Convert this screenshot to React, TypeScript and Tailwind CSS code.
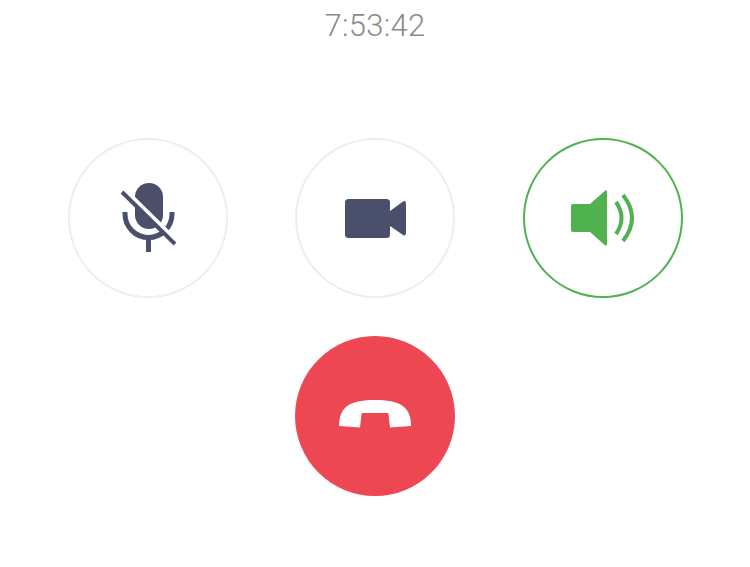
function MicOff() {
  return (
    <svg width="56" height="72" viewBox="0 0 56 72" fill="none">
      <rect x="15" y="1" width="28" height="46" rx="14" fill="#4a4f6c" />
      <path d="M5 30v2a23.500 23.500 0 0 0 47 0v-2" stroke="#4a4f6c" strokeWidth="5" />
      <path d="M28.500 56v14" stroke="#4a4f6c" strokeWidth="5" />
      <path d="M2 10l53 52" stroke="#ffffff" strokeWidth="4" transform="translate(2.500 -2.500)" />
      <path d="M2 10l53 52" stroke="#4a4f6c" strokeWidth="4" />
    </svg>
  );
}

function Video() {
  return (
    <svg width="62" height="40" viewBox="-1 -1 62 40" fill="#4a4f6c">
      <rect x="0" y="0" width="45" height="39" rx="3.500" />
      <path d="M45 12L58 2.500q3-1.500 3 2V34q0 3.500-3 2L45 27z" />
    </svg>
  );
}

function Speaker() {
  return (
    <svg width="64" height="56" viewBox="0 0 64 56" fill="none">
      <path
        d="M0 16a2 2 0 0 1 2-2h17L34 .8q2-1.300 2 1V54.200q0 2.300-2 1L19 42H2a2 2 0 0 1-2-2z"
        fill="#4fb24f"
      />
      <path d="M45 12q11 16 0 32" stroke="#4fb24f" strokeWidth="4" />
      <path d="M52 5q18 23 0 46" stroke="#4fb24f" strokeWidth="4" />
    </svg>
  );
}

function HangUp() {
  return (
    <svg className="mb-[4px]" width="72" height="28" viewBox="0 0 72 28" fill="#ffffff">
      <path d="M0 26C0 6 12 0 36 0s36 6 36 26l-21 1.500-1.500-13.500a1 1 0 0 0-1-1H23.500a1 1 0 0 0-1 1L21 27.500z" />
    </svg>
  );
}

export default function App() {
  return (
    <div className="flex h-[567px] w-[750px] flex-col items-center bg-white font-['Roboto',sans-serif]">
      <div className="mt-[8px] h-[36px] text-[31px] leading-[36px] font-light tracking-[0.3px] text-[#8a8a8a]">7:53:42</div>
      <div className="mt-[94px] flex gap-[67.500px]">
        <button className="flex h-[160px] w-[160px] items-center justify-center rounded-full border-2 border-[#eeeeee]">
          <MicOff />
        </button>
        <button className="flex h-[160px] w-[160px] items-center justify-center rounded-full border-2 border-[#eeeeee]">
          <Video />
        </button>
        <button className="flex h-[160px] w-[160px] items-center justify-center rounded-full border-2 border-[#4fb24f]">
          <Speaker />
        </button>
      </div>
      <button className="mt-[38px] flex h-[160px] w-[160px] items-center justify-center rounded-full bg-[#ed4753]">
        <HangUp />
      </button>
    </div>
  );
}
